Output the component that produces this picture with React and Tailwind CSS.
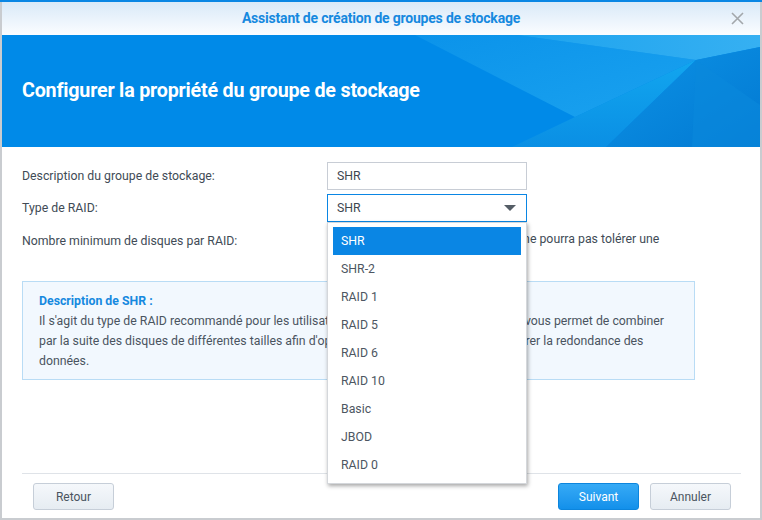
import React from "react";

const font = { fontFamily: "Roboto, 'Liberation Sans', Arial, sans-serif" };

function Banner() {
  return (
    <div className="relative h-[112px] bg-[#008ae8] overflow-hidden">
      <svg className="absolute inset-0 h-full w-full" viewBox="0 0 758 112" preserveAspectRatio="none">
        <defs>
          <linearGradient id="g1" x1="0" y1="0" x2="1" y2="1">
            <stop offset="0" stopColor="#0b93ea" />
            <stop offset="1" stopColor="#1aa2ef" />
          </linearGradient>
          <linearGradient id="g2" x1="0" y1="0" x2="1" y2="0">
            <stop offset="0" stopColor="#1da3ee" />
            <stop offset="1" stopColor="#36b0f2" />
          </linearGradient>
          <linearGradient id="g3" x1="0" y1="0" x2="0" y2="1">
            <stop offset="0" stopColor="#12a6ef" />
            <stop offset="1" stopColor="#0a8fe4" />
          </linearGradient>
          <linearGradient id="g4" x1="0" y1="0" x2="1" y2="1">
            <stop offset="0" stopColor="#0d93e6" />
            <stop offset="1" stopColor="#0279d2" />
          </linearGradient>
        </defs>
        <polygon points="413,0 515,0 694,25 573,82" fill="url(#g1)" />
        <polygon points="515,0 758,0 758,12 694,25" fill="url(#g2)" />
        <polygon points="573,82 694,25 604,112 510,112" fill="url(#g3)" />
        <polygon points="694,25 758,12 758,112 604,112" fill="url(#g4)" />
        <polygon points="694,25 758,70 758,112 690,112" fill="#0a88dc" opacity="0.6" />
      </svg>
      <div className="relative flex h-full items-center pl-[20px]">
        <h1 className="text-[19.7px] font-bold text-white tracking-[-0.2px]">
          Configurer la propriété du groupe de stockage
        </h1>
      </div>
    </div>
  );
}

const options = ["SHR", "SHR-2", "RAID 1", "RAID 5", "RAID 6", "RAID 10", "Basic", "JBOD", "RAID 0"];

function Btn({ children, primary }) {
  return (
    <button
      className={
        primary
          ? "h-[27px] w-[81px] rounded-[3px] border border-[#0c85dd] bg-gradient-to-b from-[#35aaf6] to-[#1290ea] text-[12px] text-white"
          : "h-[27px] w-[81px] rounded-[3px] border border-[#c6ced8] bg-gradient-to-b from-[#f5f8fb] to-[#e6ecf2] text-[12px] text-[#4a5460]"
      }
    >
      {children}
    </button>
  );
}

export default function App() {
  return (
    <div className="h-[520px] w-[762px] bg-[#c9ccd0] overflow-hidden" style={font}>
      <div className="h-[2px] w-full bg-[#0a86e4]" />
      <div className="ml-[2px] flex h-[516px] w-[758px] flex-col bg-white">
        {/* title bar */}
        <div className="relative flex h-[33px] items-center justify-center bg-gradient-to-b from-[#d9e9f8] to-[#fbfdff]">
          <span className="text-[14px] font-bold text-[#1689df] tracking-[-0.2px]">
            Assistant de création de groupes de stockage
          </span>
          <svg className="absolute right-[16px] top-[10px]" width="13" height="13" viewBox="0 0 13 13">
            <path d="M1 1 L12 12 M12 1 L1 12" stroke="#a3a7ab" strokeWidth="1.6" />
          </svg>
        </div>
        <Banner />
        {/* body */}
        <div className="relative flex flex-1 flex-col px-[20px] pt-[15px]">
          <div className="flex flex-col gap-[4px] text-[12.3px] text-[#414b56]">
            <div className="flex h-[28px] items-center">
              <div className="w-[305px]">Description du groupe de stockage:</div>
              <div className="flex h-[28px] w-[200px] items-center border border-[#c8cdd5] px-[9px] text-[#3d4650]">SHR</div>
            </div>
            <div className="flex h-[28px] items-center">
              <div className="w-[305px]">Type de RAID:</div>
              <div className="relative flex h-[28px] w-[200px] items-center justify-between border border-[#0a86e4] px-[9px] text-[#3d4650]">
                <span>SHR</span>
                <svg width="12" height="7" viewBox="0 0 12 7" className="mr-[1px]">
                  <path d="M0 0 L12 0 L6 6 Z" fill="#555d66" />
                </svg>
                {/* dropdown */}
                <div className="absolute left-[-1px] top-[27px] z-10 w-[200px] bg-white px-[5px] py-[4px] shadow-[1px_2px_4px_rgba(0,0,0,0.35)] border border-[#d4d7db]">
                  {options.map((o, i) => (
                    <div
                      key={o}
                      className={
                        i === 0
                          ? "flex h-[28px] items-center bg-[#0a86e4] pl-[8px] text-white"
                          : "flex h-[28px] items-center pl-[8px] text-[#4d5662]"
                      }
                    >
                      {o}
                    </div>
                  ))}
                </div>
              </div>
            </div>
            <div className="flex h-[28px] items-start pt-[6px]">
              <div className="w-[305px]">Nombre minimum de disques par RAID:</div>
              <div className="w-[370px] whitespace-nowrap leading-[20px] mt-[-3px]">
                1 (un volume SHR sur 1 seul disque ne pourra pas tolérer une
                <br />
                défaillance de disque)
              </div>
            </div>
          </div>
          <div className="mt-[27px] w-[673px] border border-[#b9dcf5] bg-[#f2f8fe] px-[16px] pt-[9px] pb-[8px] text-[12.3px] leading-[20px] text-[#4a545f]">
            <div className="font-bold text-[#1689df]">Description de SHR :</div>
            <div className="whitespace-nowrap">
              Il s'agit du type de RAID recommandé pour les utilisateurs débutants ou intermédiaires. Il vous permet de combiner
              <br />
              par la suite des disques de différentes tailles afin d'optimiser la capacité utilisée et d'assurer la redondance des
              <br />
              données.
            </div>
          </div>
          <div className="flex-1" />
          <div className="border-t border-[#dfe3e8] w-[719px]" />
          <div className="flex h-[44px] items-start pt-[9px] pl-[11px] pr-[9px]">
            <Btn>Retour</Btn>
            <div className="flex-1" />
            <Btn primary>Suivant</Btn>
            <div className="w-[11px]" />
            <Btn>Annuler</Btn>
          </div>
        </div>
      </div>
    </div>
  );
}
